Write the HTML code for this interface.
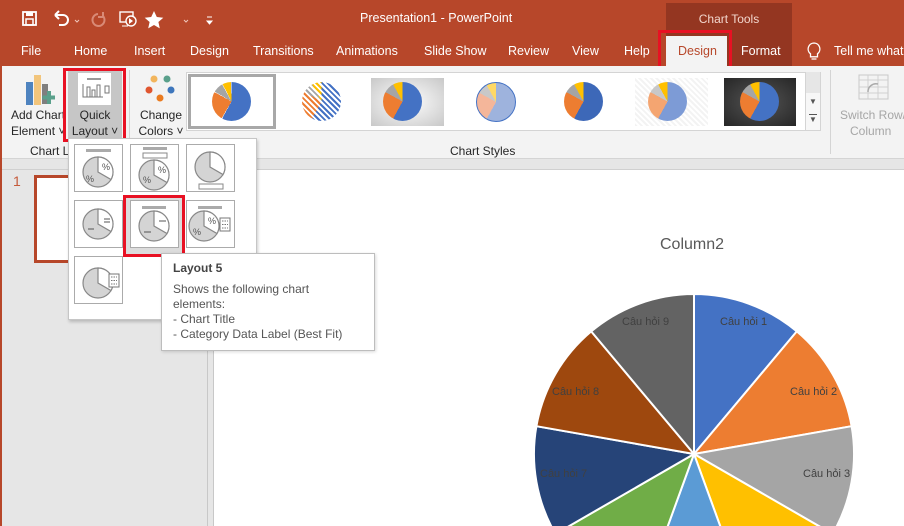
<!DOCTYPE html>
<html style="overflow:hidden"><head><meta charset="utf-8"><style>
*{margin:0;padding:0;box-sizing:border-box}
html,body{width:904px;height:526px;overflow:hidden}
body{position:relative;font-family:"Segoe UI","Liberation Sans","DejaVu Sans",sans-serif;background:#fff}
.a{position:absolute;white-space:nowrap}
.t{color:#fff;font-size:12.5px;position:absolute;top:44px;white-space:nowrap}
.rb{font-size:12px;color:#262626;position:absolute;text-align:center;line-height:16px;white-space:nowrap}
.pie{position:absolute;border-radius:50%}
.lab{position:absolute;font-size:11px;color:#404040;white-space:nowrap}
</style></head><body>
<div class="a" style="left:0;top:0;width:904px;height:66px;background:#B7472A"></div>
<div class="a" style="left:666px;top:3px;width:126px;height:63px;background:#943621"></div>
<div class="a" style="left:670px;top:12px;width:118px;text-align:center;color:#f2d6cd;font-size:12px">Chart Tools</div>
<div class="a" style="left:360px;top:11px;color:#fff;font-size:12.5px">Presentation1 - PowerPoint</div>
<svg class="a" style="left:18px;top:8px" width="200" height="22" viewBox="0 0 200 22">
<rect x="5" y="4" width="13" height="13" fill="none" stroke="#fff" stroke-width="1.8"/><rect x="8" y="4" width="7" height="4" fill="#fff"/><rect x="8" y="11" width="7" height="6" fill="none" stroke="#fff" stroke-width="1.5"/>
<path d="M37 7 h8 a5 5 0 0 1 0 10 h-4 M37 7 l4 -4 M37 7 l4 4" fill="none" stroke="#fff" stroke-width="2"/>
<path d="M57 12 l2 2 l2 -2" fill="none" stroke="#f0c8bc" stroke-width="1"/>
<path d="M80 6 a6 6 0 1 0 5 2 M85 4 v5 h-5" fill="none" stroke="#d98a76" stroke-width="2"/>
<rect x="102" y="4" width="13" height="10" fill="none" stroke="#fff" stroke-width="1.4"/><circle cx="113" cy="13" r="5" fill="#B7472A" stroke="#fff" stroke-width="1.4"/><path d="M111 10 l4 3 l-4 3z" fill="#fff"/><path d="M104 18 h6" stroke="#fff"/>
<path d="M136 3 l2.8 6 6.5 .7 -4.9 4.3 1.4 6.4 -5.8 -3.4 -5.8 3.4 1.4 -6.4 -4.9 -4.3 6.5 -.7z" fill="#fff"/>
<path d="M166 12 l2 2 l2 -2" fill="none" stroke="#f0c8bc" stroke-width="1"/>
<path d="M189 9 h5 M189 13 h5 l-2.5 3z" fill="#fff" stroke="#fff"/>
</svg>
<div class="t" style="left:21px">File</div>
<div class="t" style="left:74px">Home</div>
<div class="t" style="left:134px">Insert</div>
<div class="t" style="left:190px">Design</div>
<div class="t" style="left:253px">Transitions</div>
<div class="t" style="left:336px">Animations</div>
<div class="t" style="left:424px">Slide Show</div>
<div class="t" style="left:508px">Review</div>
<div class="t" style="left:572px">View</div>
<div class="t" style="left:624px">Help</div>
<div class="a" style="left:666px;top:36px;width:61px;height:32px;background:#F3F3F3"></div>
<div class="t" style="left:678px;color:#B7472A">Design</div>
<div class="t" style="left:741px">Format</div>
<svg class="a" style="left:806px;top:42px" width="16" height="20"><path d="M8 1 a6 6 0 0 0 -3.5 10.8 v3 h7 v-3 A6 6 0 0 0 8 1z M5.5 17 h5" fill="none" stroke="#fff" stroke-width="1.3"/></svg>
<div class="t" style="left:834px">Tell me what</div>
<div class="a" style="left:658px;top:30px;width:74px;height:46px;border:3px solid #E81123"></div>
<div class="a" style="left:2px;top:66px;width:902px;height:93px;background:#F3F3F3"></div>
<div class="a" style="left:0;top:158px;width:904px;height:1px;background:#d4d4d4"></div>
<div class="a" style="left:0;top:159px;width:904px;height:11px;background:#E6E6E6"></div>
<div class="a" style="left:0;top:169px;width:904px;height:1px;background:#d0d0d0"></div>
<div class="a" style="left:0;top:0;width:2px;height:526px;background:#B7472A"></div>
<svg class="a" style="left:25px;top:74px" width="30" height="32"><rect x="1" y="8" width="7" height="23" fill="#4E83BF"/><rect x="9" y="1" width="7" height="30" fill="#F2C57C"/><rect x="17" y="10" width="6" height="20" fill="#7f7f7f"/><path d="M24 17 v13 M17.5 23.5 h13" stroke="#5AA08B" stroke-width="4"/></svg>
<div class="rb" style="left:11px;top:107px;text-align:left;width:52px;overflow:hidden">Add Chart<br>Element ˅</div>
<div class="a" style="left:68px;top:68px;width:54px;height:70px;background:#C6C6C6"></div>
<div class="a" style="left:78px;top:73px;width:33px;height:32px;background:#fff"></div>
<svg class="a" style="left:78px;top:73px" width="33" height="32"><path d="M9 6 h14" stroke="#999" stroke-width="2"/><path d="M5 11 v13 h20 M9 24 v-10 h3 v10 M14 24 v-7 h3 v7 M19 24 v-12 h3 v12" fill="none" stroke="#777"/><rect x="27" y="13" width="4" height="7" fill="none" stroke="#777"/></svg>
<div class="rb" style="left:68px;top:107px;width:54px">Quick<br>Layout ˅</div>
<div class="a" style="left:63px;top:68px;width:63px;height:74px;border:3px solid #E81123"></div>
<svg class="a" style="left:145px;top:74px" width="32" height="30"><circle cx="9" cy="5" r="3.5" fill="#F2B55C"/><circle cx="22" cy="5" r="3.5" fill="#5AA08B"/><circle cx="4" cy="16" r="3.5" fill="#E0552F"/><circle cx="26" cy="16" r="3.5" fill="#3E76BC"/><circle cx="15" cy="24" r="3.5" fill="#EA7B20"/></svg>
<div class="rb" style="left:133px;top:107px;width:56px">Change<br>Colors ˅</div>
<div class="rb" style="left:30px;top:143px">Chart La</div>
<div class="rb" style="left:450px;top:143px">Chart Styles</div>
<div class="a" style="left:129px;top:70px;width:1px;height:82px;background:#d4d4d4"></div>
<div class="a" style="left:830px;top:70px;width:1px;height:84px;background:#d4d4d4"></div>
<div class="a" style="left:186px;top:72px;width:635px;height:59px;background:#fff;border:1px solid #d4d4d4"></div>
<div class="a" style="left:188px;top:74px;width:88px;height:55px;border:3px solid #a8a8a8;background:#fff"></div>
<div class="pie" style="left:212px;top:82px;width:39px;height:39px;background:conic-gradient(#4472C4 0 58%,#fff 58% 58.5%,#ED7D31 58.5% 83%,#fff 83% 83.5%,#A5A5A5 83.5% 92%,#fff 92% 92.5%,#FFC000 92.5% 99.5%,#fff 0)"></div>
<div class="pie" style="left:302px;top:82px;width:39px;height:39px;background:repeating-linear-gradient(45deg,transparent 0 2px,#fff 2px 4px),conic-gradient(#4472C4 0 58%,#ED7D31 58% 83%,#A5A5A5 83% 92%,#FFC000 92%)"></div>
<div class="a" style="left:371px;top:78px;width:73px;height:48px;background:radial-gradient(#fff,#c8c8c8)"></div>
<div class="pie" style="left:383px;top:82px;width:39px;height:39px;background:conic-gradient(#4472C4 0 58%,#ED7D31 58% 83%,#A5A5A5 83% 92%,#FFC000 92%)"></div>
<div class="pie" style="left:476px;top:82px;width:40px;height:40px;background:conic-gradient(#9EB3DD 0 58%,#F4B69A 58% 83%,#C8C8C8 83% 92%,#FFD966 92%);border:1px solid #4472C4"></div>
<div class="pie" style="left:564px;top:82px;width:39px;height:39px;background:conic-gradient(#3D68B8 0 58%,#ED7D31 58% 83%,#A5A5A5 83% 92%,#FFC000 92%)"></div>
<div class="a" style="left:635px;top:78px;width:73px;height:48px;background:repeating-linear-gradient(45deg,#f3f3f3 0 2px,#fff 2px 4px)"></div>
<div class="pie" style="left:648px;top:82px;width:39px;height:39px;background:conic-gradient(#7D9BD6 0 58%,#F4A571 58% 83%,#C8C8C8 83% 92%,#FFC000 92%)"></div>
<div class="a" style="left:724px;top:78px;width:72px;height:48px;background:radial-gradient(#555,#262626)"></div>
<div class="pie" style="left:740px;top:82px;width:39px;height:39px;background:conic-gradient(#4472C4 0 58%,#ED7D31 58% 83%,#A5A5A5 83% 92%,#FFC000 92%)"></div>
<div class="a" style="left:805px;top:72px;width:16px;height:59px;background:#f7f7f7;border:1px solid #d4d4d4"></div>
<div class="a" style="left:806px;top:72px;width:14px;height:21px;background:#e6e6e6"></div>
<div class="a" style="left:809px;top:97px;font-size:8px;color:#555">▼</div>
<div class="a" style="left:809px;top:114px;font-size:8px;color:#555;border-top:1px solid #555;line-height:9px">▼</div>
<svg class="a" style="left:858px;top:74px" width="32" height="27"><rect x="1" y="1" width="29" height="24" fill="none" stroke="#c8c8c8"/><path d="M1 6 h29 M1 13 h29 M1 19 h29 M10 1 v24 M20 1 v24" stroke="#d0d0d0"/><path d="M10 18 a8 8 0 0 1 10 -8" fill="none" stroke="#aaa" stroke-width="1.5"/></svg>
<div class="rb" style="left:840px;top:107px;width:70px;text-align:left;color:#a6a6a6">Switch Row/<br>&nbsp;&nbsp;&nbsp;Column</div>
<div class="a" style="left:2px;top:170px;width:205px;height:356px;background:#E6E6E6"></div>
<div class="a" style="left:207px;top:170px;width:7px;height:356px;background:#E6E6E6;border-left:1px solid #c8c8c8;border-right:1px solid #c8c8c8"></div>
<div class="a" style="left:13px;top:173px;color:#C55A3A;font-size:14px">1</div>
<div class="a" style="left:34px;top:175px;width:60px;height:88px;border:3px solid #B7472A;background:#fff"></div>
<div class="a" style="left:660px;top:236px;font-size:16px;color:#595959">Column2</div>
<svg class="a" style="left:0;top:0" width="904" height="526">
<g stroke="#fff" stroke-width="2" stroke-linejoin="round">
<path d="M694 454 L694 294 A160 160 0 0 1 796.8 331.4Z" fill="#4472C4"/>
<path d="M694 454 L796.8 331.4 A160 160 0 0 1 851.6 426.2Z" fill="#ED7D31"/>
<path d="M694 454 L851.6 426.2 A160 160 0 0 1 832.6 534Z" fill="#A5A5A5"/>
<path d="M694 454 L832.6 534 A160 160 0 0 1 748.7 604.4Z" fill="#FFC000"/>
<path d="M694 454 L748.7 604.4 A160 160 0 0 1 639.3 604.4Z" fill="#5B9BD5"/>
<path d="M694 454 L639.3 604.4 A160 160 0 0 1 555.4 534Z" fill="#70AD47"/>
<path d="M694 454 L555.4 534 A160 160 0 0 1 536.4 426.2Z" fill="#264478"/>
<path d="M694 454 L536.4 426.2 A160 160 0 0 1 591.2 331.4Z" fill="#9E480E"/>
<path d="M694 454 L591.2 331.4 A160 160 0 0 1 694 294Z" fill="#636363"/>
</g></svg>
<div class="lab" style="left:720px;top:316px">Câu hỏi 1</div>
<div class="lab" style="left:790px;top:386px">Câu hỏi 2</div>
<div class="lab" style="left:803px;top:468px">Câu hỏi 3</div>
<div class="lab" style="left:540px;top:468px">Câu hỏi 7</div>
<div class="lab" style="left:552px;top:386px">Câu hỏi 8</div>
<div class="lab" style="left:622px;top:316px">Câu hỏi 9</div>
<div class="a" style="left:68px;top:138px;width:189px;height:182px;background:#fff;border:1px solid #c6c6c6;box-shadow:1px 2px 3px rgba(0,0,0,.2)"></div>
<div class="a" style="left:123px;top:195px;width:61px;height:62px;background:#dcdcdc"></div>
<svg class="a" style="left:0;top:0" width="260" height="320">
<defs>
<g id="pc"><circle r="15" fill="#d4d4d4" stroke="#888" stroke-width="1.2"/><path d="M0 -15 A15 15 0 0 1 13 7.5 L0 0Z" fill="#fff" stroke="#888" stroke-width="1.2"/></g>
</defs>
<rect x="74.5" y="144.5" width="48" height="47" fill="#fff" stroke="#ababab"/>
<rect x="130.5" y="144.5" width="48" height="47" fill="#fff" stroke="#ababab"/>
<rect x="186.5" y="144.5" width="48" height="47" fill="#fff" stroke="#ababab"/>
<rect x="74.5" y="200.5" width="48" height="47" fill="#fff" stroke="#ababab"/>
<rect x="130.5" y="200.5" width="48" height="47" fill="#fff" stroke="#ababab"/>
<rect x="186.5" y="200.5" width="48" height="47" fill="#fff" stroke="#ababab"/>
<rect x="74.5" y="256.5" width="48" height="47" fill="#fff" stroke="#ababab"/>
<path d="M86 150.5 h25 M143 148.5 h24 M142 207.5 h24 M198 207.5 h24" stroke="#aaa" stroke-width="3"/>
<rect x="143" y="153" width="24" height="5" fill="none" stroke="#888"/>
<rect x="199" y="184" width="24" height="5" fill="none" stroke="#888"/>
<use href="#pc" x="98" y="172"/><use href="#pc" x="154" y="175"/><use href="#pc" x="210" y="167"/>
<use href="#pc" x="98" y="224"/><use href="#pc" x="154" y="226"/><use href="#pc" x="204" y="226"/>
<use href="#pc" x="98" y="283"/>
<text x="102" y="170" font-size="9" fill="#555">%</text><text x="86" y="182" font-size="9" fill="#555">%</text>
<text x="158" y="173" font-size="9" fill="#555">%</text><text x="143" y="183" font-size="9" fill="#555">%</text>
<text x="208" y="224" font-size="9" fill="#555">%</text><text x="193" y="235" font-size="9" fill="#555">%</text>
<path d="M104 219 h6 M104 222 h6 M88 229 h6 M159 221 h7 M144 232 h7" stroke="#555"/>
<rect x="220" y="218" width="10" height="13" fill="#fff" stroke="#777"/><rect x="109" y="274" width="10" height="13" fill="#fff" stroke="#777"/>
<path d="M222 221 h6 M222 224.5 h6 M222 228 h6 M111 277 h6 M111 280.5 h6 M111 284 h6" stroke="#777" stroke-dasharray="1.5 1"/>
</svg>
<div class="a" style="left:123px;top:195px;width:62px;height:62px;border:3px solid #E81123"></div>
<div class="a" style="left:161px;top:253px;width:214px;height:98px;background:#fff;border:1px solid #bdbdbd;box-shadow:1px 1px 3px rgba(0,0,0,.15);padding:7px 11px;font-size:12px;color:#555;line-height:15px">
<div style="font-weight:bold;color:#444;margin-bottom:6px">Layout 5</div>
Shows the following chart<br>elements:<br>- Chart Title<br>- Category Data Label (Best Fit)</div>
</body></html>
